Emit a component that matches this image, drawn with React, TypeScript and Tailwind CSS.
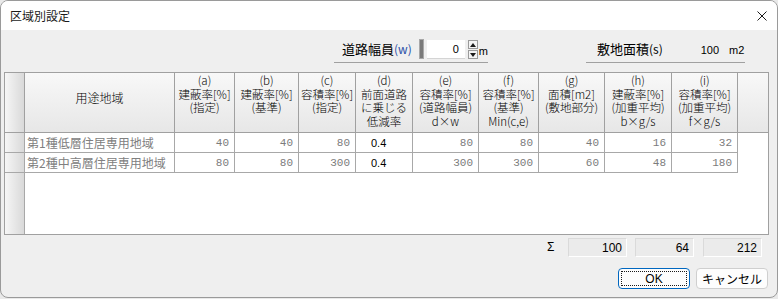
import React from "react";

const COLS = [
  { w: "w-[60px]", head: ["(a)", "建蔽率[%]", "(指定)"] },
  { w: "w-[64px]", head: ["(b)", "建蔽率[%]", "(基準)"] },
  { w: "w-[57px]", head: ["(c)", "容積率[%]", "(指定)"] },
  { w: "w-[57px]", head: ["(d)", "前面道路", "に乗じる", "低減率"] },
  { w: "w-[66px]", head: ["(e)", "容積率[%]", "(道路幅員)", "d×w"] },
  { w: "w-[60px]", head: ["(f)", "容積率[%]", "(基準)", "Min(c,e)"] },
  { w: "w-[66px]", head: ["(g)", "面積[m2]", "(敷地部分)"] },
  { w: "w-[67px]", head: ["(h)", "建蔽率[%]", "(加重平均)", "b×g/s"] },
  { w: "w-[66px]", head: ["(i)", "容積率[%]", "(加重平均)", "f×g/s"] },
];

const ROWS = [
  { name: "第1種低層住居専用地域", values: ["40", "40", "80", "0.4", "80", "80", "40", "16", "32"] },
  { name: "第2種中高層住居専用地域", values: ["80", "80", "300", "0.4", "300", "300", "60", "48", "180"] },
];

const TOTALS = ["100", "64", "212"];

function SpinButton({ up }: { up?: boolean }) {
  return (
    <div className="w-[10px] h-[9px] border border-[#9a9a9a] bg-[#f4f4f4] flex items-center justify-center">
      <svg width="6" height="4" viewBox="0 0 6 4">
        <path d={up ? "M0 4 L3 0 L6 4 Z" : "M0 0 L3 4 L6 0 Z"} fill="#1a1a1a" />
      </svg>
    </div>
  );
}

export default function App() {
  return (
    <div className="w-[778px] h-[299px] bg-[#e9e9e9] font-['Noto_Sans_CJK_JP',sans-serif]">
      <div className="w-[778px] h-[298px] border border-[#9a9a9a] rounded-[8px] overflow-hidden flex flex-col bg-[#efefef]">
        {/* title bar */}
        <div className="h-[29px] bg-white flex items-center pl-[9px] pr-[10px] shrink-0">
          <span className="text-[12px] leading-[14px] text-[#1a1a1a] pt-[1px]">区域別設定</span>
          <svg className="ml-auto mt-[1px]" width="10" height="10" viewBox="0 0 10 10">
            <path d="M0.5 0.5 L9.5 9.5 M9.5 0.5 L0.5 9.5" stroke="#1a1a1a" strokeWidth="1" />
          </svg>
        </div>

        {/* road width / site area */}
        <div className="h-[42px] pt-[9px] flex shrink-0">
          <div className="ml-[333px] w-[154px] h-[24px] border-b border-[#a0a0a0] flex items-start pl-[8px]">
            <span className="text-[13px] leading-[20px] text-black whitespace-nowrap">
              道路幅員<span className="text-[#2a4fa8] text-[12px]">(w)</span>
            </span>
            <div className="ml-[7px] w-[6px] h-[20px] bg-[#7a7a7a] border border-[#a8a8a8]" />
            <div className="ml-[3px] mt-[1px] w-[43px] h-[19px] bg-white border-b border-[#d4d4d4] flex items-center justify-end pr-[6px] font-['Liberation_Sans',sans-serif] text-[11px] text-black">
              0
            </div>
            <div className="ml-[3px] mt-[1px] flex flex-col gap-[1px]">
              <SpinButton up />
              <SpinButton />
            </div>
            <span className="ml-[1px] mt-[5px] font-['Liberation_Sans',sans-serif] text-[11px] leading-[14px] text-black">m</span>
          </div>
          <div className="ml-[98px] w-[159px] h-[24px] border-b border-[#a0a0a0] flex items-start pl-[11px]">
            <span className="text-[13px] leading-[20px] text-black whitespace-nowrap">
              敷地面積<span className="text-[12px]">(s)</span>
            </span>
            <span className="ml-[38px] mt-[4px] font-['Liberation_Sans',sans-serif] text-[11px] leading-[14px] text-black">100</span>
            <span className="ml-[10px] mt-[4px] font-['Liberation_Sans',sans-serif] text-[11px] leading-[14px] text-black">m2</span>
          </div>
        </div>

        {/* table */}
        <div className="ml-[3px] w-[765px] h-[163px] border border-[#a0a0a0] bg-white flex flex-col shrink-0">
          <div className="h-[60px] flex border-b border-[#a0a0a0]">
            <div className="w-[20px] border-r border-[#a0a0a0] bg-linear-to-r from-[#f6f6f6] to-[#d9d9d9]" />
            <div className="w-[150px] border-r border-[#a0a0a0] bg-linear-to-b from-[#f8f8f8] to-[#e7e7e7] flex items-center justify-center pb-[9px] text-[12px] leading-[14px] text-black font-light">
              用途地域
            </div>
            {COLS.map((c) => (
              <div
                key={c.head[0]}
                className={`${c.w} border-r border-[#a0a0a0] bg-linear-to-b from-[#f8f8f8] to-[#e7e7e7] pt-[1px] text-center text-[11.5px] leading-[13.5px] text-black font-light whitespace-nowrap`}
              >
                {c.head.map((line, i) => (
                  <React.Fragment key={line}>
                    {i > 0 && <br />}
                    {line}
                  </React.Fragment>
                ))}
              </div>
            ))}
            <div className="flex-1 bg-linear-to-b from-[#f8f8f8] to-[#e7e7e7]" />
          </div>

          {ROWS.map((r) => (
            <div key={r.name} className="h-[20px] flex">
              <div className="w-[20px] border-r border-b border-[#a8a8a8] bg-linear-to-r from-[#f6f6f6] to-[#d9d9d9]" />
              <div className="w-[150px] border-r border-b border-[#a8a8a8] flex items-center pl-[2px] text-[12px] leading-[14px] text-[#808080] whitespace-nowrap">
                {r.name}
              </div>
              {r.values.map((v, i) =>
                i === 3 ? (
                  <div
                    key={i}
                    className={`${COLS[i].w} border-r border-b border-[#a8a8a8] flex items-center pl-[15px] font-['Liberation_Sans',sans-serif] text-[11px] leading-[14px] text-black`}
                  >
                    {v}
                  </div>
                ) : (
                  <div
                    key={i}
                    className={`${COLS[i].w} border-r border-b border-[#a8a8a8] flex items-center justify-end pr-[5px] font-['Liberation_Mono',monospace] text-[11px] leading-[14px] text-[#7c7c7c]`}
                  >
                    {v}
                  </div>
                )
              )}
            </div>
          ))}

          <div className="flex-1 flex">
            <div className="w-[20px] border-r border-[#a8a8a8] bg-linear-to-r from-[#f6f6f6] to-[#d9d9d9]" />
          </div>
        </div>

        {/* totals */}
        <div className="mt-[3px] h-[19px] flex shrink-0">
          <span className="ml-[546px] w-[21px] text-[12px] leading-[19px] text-black font-['Liberation_Sans',sans-serif]">Σ</span>
          {TOTALS.map((t, i) => (
            <div
              key={t}
              className={`${i === 0 ? "ml-0" : i === 1 ? "ml-[8px]" : "ml-[9px]"} w-[59px] h-[19px] bg-[#ebebeb] border-t border-l border-[#dadada] border-b border-b-white border-r border-r-white flex items-center justify-end pr-[4px] font-['Liberation_Sans',sans-serif] text-[12px] leading-[14px] text-black`}
            >
              {t}
            </div>
          ))}
        </div>

        {/* buttons */}
        <div className="mt-[11px] h-[21px] flex shrink-0">
          <div className="ml-[617px] w-[72px] h-[21px] rounded-[4px] border border-[#0067c0] bg-[#fdfdfd] p-[2px] flex">
            <div className="flex-1 border border-dotted border-[#1a1a1a] flex items-center justify-center font-['Liberation_Sans',sans-serif] text-[12px] leading-[14px] text-black">
              OK
            </div>
          </div>
          <div className="ml-[6px] w-[72px] h-[21px] rounded-[4px] border border-[#cfcfcf] bg-[#fdfdfd] flex items-center justify-center text-[12px] leading-[14px] text-black">
            キャンセル
          </div>
        </div>
      </div>
    </div>
  );
}
